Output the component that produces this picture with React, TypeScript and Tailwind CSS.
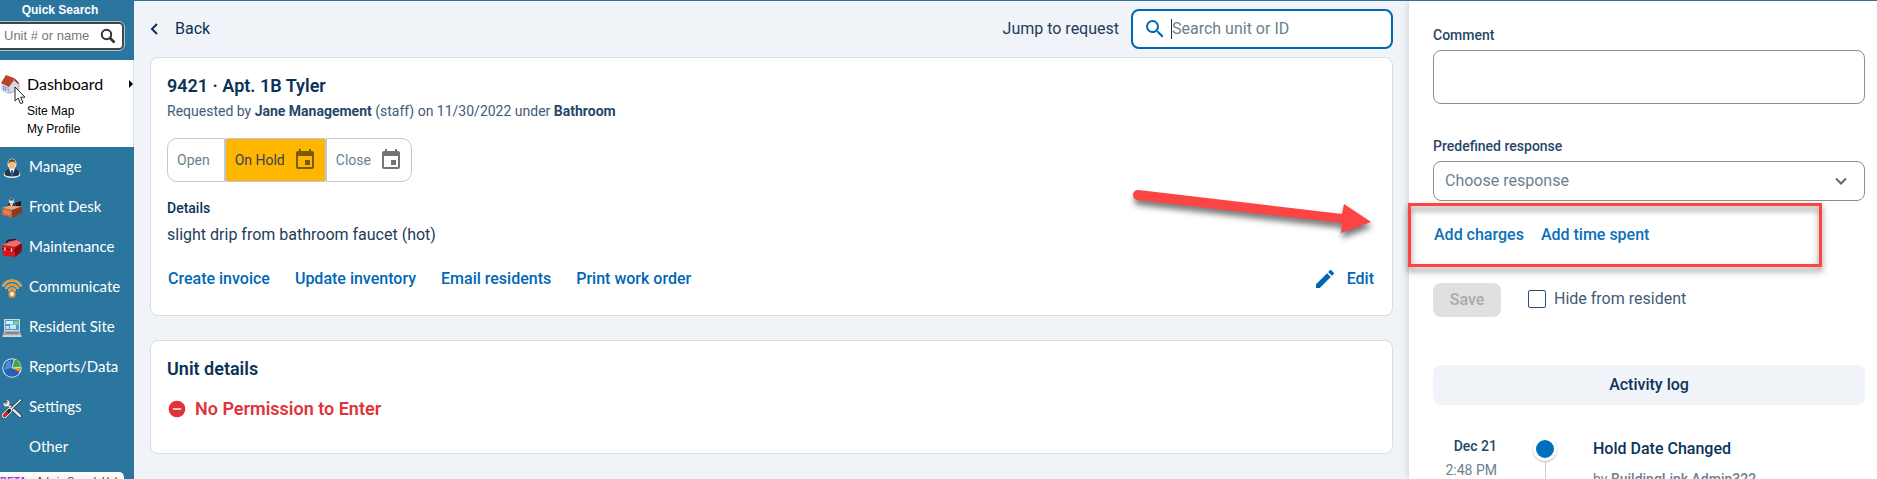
import React from "react";

const CalendarIcon = ({ className }: { className: string }) => (
  <svg viewBox="0 0 24 24" className={className} fill="currentColor" aria-hidden="true">
    <path d="M17 12h-5v5h5v-5zM16 1v2H8V1H6v2H5c-1.11 0-1.99.9-1.99 2L3 19a2 2 0 0 0 2 2h14c1.1 0 2-.9 2-2V5c0-1.1-.9-2-2-2h-1V1h-2zm3 18H5V8h14v11z" />
  </svg>
);

const SearchIcon = ({ className }: { className: string }) => (
  <svg viewBox="0 0 24 24" className={className} fill="currentColor" aria-hidden="true">
    <path d="M15.5 14h-.79l-.28-.27A6.47 6.47 0 0 0 16 9.5 6.5 6.5 0 1 0 9.5 16c1.61 0 3.09-.59 4.23-1.57l.27.28v.79l5 4.99L20.49 19l-4.99-5zm-6 0C7.01 14 5 11.99 5 9.5S7.01 5 9.5 5 14 7.01 14 9.5 11.99 14 9.5 14z" />
  </svg>
);

const HouseIcon = () => (
  <svg viewBox="0 0 20 20" className="size-5 shrink-0" aria-hidden="true">
    <path d="M2 9 8 13V19L2 16.500Z" fill="#eef0fa" stroke="#9aa0b8" strokeWidth=".6" />
    <path d="M8 13 14 6 19 9V16L9 19.500Z" fill="#d7d8e2" stroke="#8a8a96" strokeWidth=".6" />
    <path d="M3 11.500 6.500 13.500V17L3 15.500Z" fill="#4a64d8" />
    <path d="M4.700 12.500V16.500M3 13.500 6.500 15.200" stroke="#fff" strokeWidth=".6" />
    <path d="M6 1 15 4.500 9 13 1 9Z" fill="#b8442a" />
    <path d="M15 4.500 19 9 18 10 14.500 6.500Z" fill="#8c2f1e" />
  </svg>
);

const ManageIcon = () => (
  <svg viewBox="0 0 20 20" className="size-5 shrink-0" aria-hidden="true">
    <ellipse cx="10" cy="16.500" rx="8.500" ry="3.400" fill="#e8eef2" />
    <path d="M2.500 16.500C3 12 6 10.500 10 10.500S17 12 17.500 16.500C16 19 4 19 2.500 16.500Z" fill="#253746" />
    <path d="M7 10.500 10 18 13 10.500Z" fill="#fff" />
    <path d="M9.300 12h1.500l.7 4-1.400 2-1.400-2Z" fill="#1a62a8" />
    <ellipse cx="10" cy="5.800" rx="4.500" ry="5.300" fill="#f4f4f0" />
    <ellipse cx="10" cy="6.200" rx="3.400" ry="4.300" fill="#f2bd7c" />
    <path d="M6.400 6C6 2.500 8 1.200 10 1.200S14 2.500 13.600 6L12.500 3.800 8 3.800Z" fill="#57401e" />
  </svg>
);

const DeskIcon = () => (
  <svg viewBox="0 0 20 20" className="size-5 shrink-0" aria-hidden="true">
    <path d="M5 9C5 6 7 5 9.500 5S13 6 13.500 9Z" fill="#222d3a" />
    <path d="M8 5.500 9.500 9 11 5.500Z" fill="#fff" />
    <circle cx="9.500" cy="3" r="2.600" fill="#e9dfd2" />
    <path d="M7.500 2.500C8 0 11 0 11.500 2.500Z" fill="#45403c" />
    <path d="M13 5 19 3V8L14 9Z" fill="#1b1c20" />
    <path d="M0 10 7 7.500 20 8.500 10 12Z" fill="#f0a074" />
    <path d="M0 10 10 12V20L0 17Z" fill="#c8643c" />
    <path d="M10 12 20 8.500V15L10 20Z" fill="#8e3a1e" />
    <path d="M1.500 11.500 8.500 13V17.500L1.500 15.500Z" fill="#dc8258" />
  </svg>
);

const ToolboxIcon = () => (
  <svg viewBox="0 0 20 20" className="size-5 shrink-0" aria-hidden="true">
    <path d="M4 5 6 2.500 13 1.500 14 4" fill="none" stroke="#3b1010" strokeWidth="1.500" />
    <path d="M0 7 14 2 20 5 13 9Z" fill="#ff6a64" />
    <path d="M0 7 13 9V19L1 17.500Z" fill="#d9161c" />
    <path d="M13 9 20 5 19.500 14 13 19Z" fill="#8e0a10" />
    <path d="M0 10.500 13 12.500 20 8.500" fill="none" stroke="#6e060a" strokeWidth="1" />
    <path d="M3 9.500V12.500M9.500 10.500V13.500" stroke="#e8e8e8" strokeWidth="1.400" />
  </svg>
);

const WifiIcon = () => (
  <svg viewBox="0 0 20 20" className="size-5 shrink-0" fill="none" strokeLinecap="round" aria-hidden="true">
    <g stroke="#f3dcb4" strokeWidth="2.400">
      <path d="M1.400 7.500C5.500 1 14.500 1 18.600 7.500M4.300 9.800C7 5.600 13 5.600 15.700 9.800M7.300 12C9 9.800 11 9.800 12.700 12" />
    </g>
    <g stroke="#e2932a" strokeWidth="1.700">
      <path d="M1.400 7.500C5.500 1 14.500 1 18.600 7.500M4.300 9.800C7 5.600 13 5.600 15.700 9.800M7.300 12C9 9.800 11 9.800 12.700 12" />
    </g>
    <rect x="6.500" y="12.800" width="7" height="7" rx="3" fill="#e2932a" />
    <circle cx="10" cy="16" r="2" fill="#fdf1da" />
  </svg>
);

const LaptopIcon = () => (
  <svg viewBox="0 0 20 20" className="size-5 shrink-0" aria-hidden="true">
    <rect x="2" y="1" width="16" height="12" rx="1" fill="#d4d8da" />
    <rect x="3.200" y="2" width="13.600" height="10" fill="#3f9be8" />
    <path d="M4 3H11V6H4Z" fill="#d8f0ff" />
    <path d="M8 6.500H14V11H8Z" fill="#bfe8fb" />
    <path d="M12 3H16V7H12Z" fill="#8fd35c" />
    <path d="M4 8H7V11H4Z" fill="#f2e48c" />
    <path d="M2 13H18L19.500 18.500H.5Z" fill="#aeb1b3" />
    <path d="M3.500 14H16.500L17 16H3Z" fill="#85888a" />
    <path d="M.5 17.500H19.500V18.800H.5Z" fill="#e4e6e6" />
  </svg>
);

const PieIcon = () => (
  <svg viewBox="0 0 20 20" className="size-5 shrink-0" aria-hidden="true">
    <circle cx="10" cy="10" r="9.700" fill="#dbe8f2" />
    <circle cx="10" cy="10" r="8.700" fill="#2263b0" />
    <path d="M3 12A7.500 7.500 0 0 1 9 2.500V10Z" fill="#4d8dd0" />
    <path d="M11 9.500 12 1.200A8.700 8.700 0 0 1 18.700 9Z" fill="#3fae2c" />
    <path d="M10 10 18.700 9.500A8.700 8.700 0 0 1 17.500 14Z" fill="#ea9a2c" />
    <path d="M12.300 1 10 10 18.700 9.200" fill="none" stroke="#fff" strokeWidth=".8" />
  </svg>
);

const ToolsIcon = () => (
  <svg viewBox="0 0 20 20" className="size-5 shrink-0" fill="none" strokeLinecap="round" aria-hidden="true">
    <path d="M4.500 5.500 18 18" stroke="#1d2830" strokeWidth="4" />
    <path d="M4.500 5.500 18 18" stroke="#e2e5e6" strokeWidth="2.600" />
    <path d="M1.500 4.500C0 8 4 10 7 8C9 5 7 1 4 1.500L5.500 4 4 6Z" fill="#eceeef" stroke="#58636a" strokeWidth=".6" />
    <path d="M18.500 2 8 12" stroke="#27313a" strokeWidth="3" />
    <path d="M18.500 2 8 12" stroke="#f0f2f3" strokeWidth="1.700" />
    <path d="M7.500 12.500 2.500 17.500" stroke="#fff" strokeWidth="5" />
    <path d="M7.500 12.500 5 15" stroke="#20262b" strokeWidth="3.600" />
    <path d="M4.500 15.500 2.500 17.500" stroke="#d3201f" strokeWidth="3.600" />
  </svg>
);

const navItems = [
  { label: "Manage", icon: <ManageIcon /> },
  { label: "Front Desk", icon: <DeskIcon /> },
  { label: "Maintenance", icon: <ToolboxIcon /> },
  { label: "Communicate", icon: <WifiIcon /> },
  { label: "Resident Site", icon: <LaptopIcon /> },
  { label: "Reports/Data", icon: <PieIcon /> },
  { label: "Settings", icon: <ToolsIcon /> },
  { label: "Other", icon: <span className="size-5 shrink-0" /> },
];

function Sidebar() {
  return (
    <aside className="flex w-[134px] shrink-0 flex-col bg-[#2a769f]">
      <form className="flex h-[60px] shrink-0 flex-col" onSubmit={(e) => e.preventDefault()}>
        <label
          htmlFor="quick-search"
          className="pt-0.5 pr-3.5 text-center font-['Liberation_Sans',sans-serif] text-xs leading-4 font-bold text-white"
        >
          Quick Search
        </label>
        <div className="mt-1 mr-2.5 flex h-7 items-center rounded-r-[5px] border-2 border-l-0 border-[#454545] bg-white pr-1.5 pl-1 outline outline-[#a9c4d3]">
          <input
            id="quick-search"
            placeholder="Unit # or name"
            className="w-full min-w-0 bg-transparent font-['Liberation_Sans',sans-serif] text-[13px] text-black outline-none placeholder:text-[#777]"
          />
          <button type="submit" aria-label="Search" className="shrink-0">
            <svg viewBox="0 0 16 16" className="size-4" fill="none" stroke="#333" aria-hidden="true">
              <circle cx="6.500" cy="6.500" r="4.700" strokeWidth="2" />
              <path d="m10 10 4.500 4.500" strokeWidth="2.600" />
            </svg>
          </button>
        </div>
      </form>

      <div className="relative h-[87px] shrink-0 border-r border-dotted border-[#b8c4cc] bg-white pt-3">
        <a href="#dashboard" className="flex items-center gap-[7px] text-base leading-6 text-black">
          <HouseIcon />
          Dashboard
        </a>
        <div className="flex flex-col pt-1.5 pl-[27px] font-['Liberation_Sans',sans-serif] text-xs leading-[18px] text-black">
          <a href="#site-map">Site Map</a>
          <a href="#profile">My Profile</a>
        </div>
        <svg viewBox="0 0 4 8" className="absolute top-5 right-0 h-2 w-1" aria-hidden="true">
          <path d="M0 0 4 4 0 8Z" fill="#000" />
        </svg>
        <svg viewBox="0 0 12 19" className="absolute top-[26px] left-3.5 h-[19px] w-3" aria-hidden="true">
          <path d="M1 1V15L4.200 12 6.500 17.700 9 16.600 6.700 11.200H11Z" fill="#fff" stroke="#222" />
        </svg>
      </div>

      <nav className="flex shrink-0 flex-col">
        {navItems.map((item) => (
          <a
            key={item.label}
            href={"#" + item.label.toLowerCase().replace(/[^a-z]/g, "-")}
            className="flex h-10 items-start gap-[7px] pt-2.5 pl-0.5 text-[15px] leading-[18px] whitespace-nowrap text-white"
          >
            <span className="flex pt-px">{item.icon}</span>
            {item.label}
          </a>
        ))}
      </nav>

      <button
        type="button"
        className="mt-[5px] mr-2.5 flex shrink-0 gap-2.5 rounded-tr-[5px] bg-gradient-to-b from-white to-[#e6e6e6] pt-0.5 font-['Liberation_Sans',sans-serif] text-[10px] leading-4 whitespace-nowrap text-[#333]"
      >
        <strong className="text-[#a03fd0]">BETA</strong>
        Admin Search Help
      </button>
    </aside>
  );
}

const links = ["Create invoice", "Update inventory", "Email residents", "Print work order"];

function RequestCard() {
  return (
    <section className="rounded-lg border border-[#dadde1] bg-white px-4 pt-4 pb-6">
      <h1 className="text-lg leading-6 font-semibold text-[#0b3358]">9421 · Apt. 1B Tyler</h1>
      <p className="mt-px text-sm leading-6 text-[#3f5b78]">
        Requested by <b className="font-bold text-[#274769]">Jane Management</b> (staff) on 11/30/2022 under{" "}
        <b className="font-bold text-[#274769]">Bathroom</b>
      </p>

      <div className="mt-[15px] flex h-11 text-sm text-[#6c7f90]">
        <button type="button" className="rounded-l-[10px] border border-[#b9cadb] pr-3.5 pl-[9px]">
          Open
        </button>
        <button
          type="button"
          className="flex items-center gap-2 rounded-xs border border-[#b9cadb] bg-[#ffb600] pr-2 pl-[9px] text-[#33415a]"
        >
          On Hold
          <CalendarIcon className="size-6 text-[#7a5a08]" />
        </button>
        <button
          type="button"
          className="flex items-center gap-2 rounded-r-[10px] border border-[#b9cadb] pr-2 pl-[9px]"
        >
          Close
          <CalendarIcon className="size-6 text-[#757378]" />
        </button>
      </div>

      <h2 className="mt-4 text-sm leading-5 font-medium text-[#0b3358]">Details</h2>
      <p className="mt-[5px] text-base leading-6 text-[#1e3c5c]">slight drip from bathroom faucet (hot)</p>

      <div className="mt-5 flex items-center gap-[25px] text-base leading-6 font-medium text-[#0067b4]">
        {links.map((text) => (
          <a key={text} href="#" className="first:ml-px">
            {text}
          </a>
        ))}
        <button type="button" className="ml-auto flex items-center gap-2.5 pr-0.5 font-medium">
          <svg viewBox="0 0 24 24" className="size-6" fill="currentColor" aria-hidden="true">
            <path d="M3 17.250V21h3.750L17.810 9.940l-3.750-3.750L3 17.250zM20.710 7.040a1 1 0 0 0 0-1.410l-2.340-2.340a1 1 0 0 0-1.410 0l-1.830 1.830 3.750 3.750 1.830-1.830z" />
          </svg>
          Edit
        </button>
      </div>
    </section>
  );
}

function Main() {
  return (
    <main className="flex min-w-0 flex-1 flex-col bg-[#f0f3f8] px-4">
      <header className="flex h-14 items-center justify-between text-base text-[#0b3358]">
        <button type="button" className="flex items-center gap-[17px]">
          <svg viewBox="0 0 8 12" className="h-3 w-2" fill="none" stroke="currentColor" strokeWidth="2" aria-hidden="true">
            <path d="M7 1 2 6l5 5" />
          </svg>
          Back
        </button>
        <div className="flex items-center gap-3">
          <label htmlFor="jump" className="text-[#1e3c5c]">
            Jump to request
          </label>
          <div className="flex h-10 w-[262px] items-center rounded-lg border-2 border-[#0067b4] bg-white pl-2.5">
            <SearchIcon className="size-6 shrink-0 text-[#0067b4]" />
            <span className="ml-1 h-5 w-px shrink-0 bg-[#0b3358]" />
            <input
              id="jump"
              placeholder="Search unit or ID"
              className="w-full min-w-0 bg-transparent outline-none placeholder:text-[#6c7f8c]"
            />
          </div>
        </div>
      </header>

      <div className="flex flex-col gap-6">
        <RequestCard />
        <section className="rounded-lg border border-[#dadde1] bg-white px-4 pt-4 pb-8">
          <h2 className="text-lg leading-6 font-semibold text-[#0b3358]">Unit details</h2>
          <p className="mt-4 flex items-center gap-2 text-lg leading-6 font-semibold text-[#e03438]">
            <svg viewBox="0 0 24 24" className="size-5" fill="currentColor" aria-hidden="true">
              <path d="M12 2a10 10 0 1 0 0 20 10 10 0 0 0 0-20zm5 11H7v-2h10v2z" />
            </svg>
            No Permission to Enter
          </p>
        </section>
      </div>
    </main>
  );
}

function SidePanel() {
  return (
    <aside className="z-10 flex w-[468px] shrink-0 flex-col bg-white pt-6 pr-3 pl-6 shadow-[0_0_8px_rgba(0,0,0,0.16)]">
      <label htmlFor="comment" className="text-sm leading-5 font-medium text-[#274769]">
        Comment
      </label>
      <textarea id="comment" className="mt-[5px] h-[54px] shrink-0 resize-none rounded-lg border border-[#8f8f8f] px-3 py-2 outline-none" />

      <label htmlFor="response" className="mt-8 text-sm leading-5 font-medium text-[#274769]">
        Predefined response
      </label>
      <div className="relative mt-[5px] shrink-0">
        <select
          id="response"
          className="h-10 w-full appearance-none rounded-lg border border-[#8f8f8f] bg-white px-[11px] text-base text-[#6c7f90] outline-none"
        >
          <option>Choose response</option>
        </select>
        <svg
          viewBox="0 0 12 8"
          className="pointer-events-none absolute top-4 right-[18px] h-2 w-3"
          fill="none"
          stroke="#666"
          strokeWidth="2"
          aria-hidden="true"
        >
          <path d="m1 1.500 5 5 5-5" />
        </svg>
      </div>

      <div className="relative mt-[22px] flex gap-[17px] pl-px text-base leading-6 font-medium text-[#0b70b8]">
        <a href="#charges">Add charges</a>
        <a href="#time">Add time spent</a>
        <div className="pointer-events-none absolute -top-5 -left-[25px] h-16 w-[414px] border-3 border-[#fc4444] drop-shadow-[0_4px_3px_rgba(0,0,0,0.5)]" />
        <svg
          viewBox="0 0 244 52"
          className="pointer-events-none absolute -top-[33px] -left-[302px] h-[52px] w-[244px] overflow-visible drop-shadow-[1px_5px_3px_rgba(0,0,0,0.55)]"
          aria-hidden="true"
        >
          <path d="M7.500 0 211 24 213 14 240 32 210 43 211 33 6.500 10A5 5 0 0 1 7.500 0Z" fill="#fc4444" />
        </svg>
      </div>

      <div className="mt-9 flex items-start">
        <button
          type="button"
          disabled
          className="h-[34px] w-[68px] rounded-lg bg-[#e0e0e0] text-base font-medium text-[#aaa]"
        >
          Save
        </button>
        <label className="ml-[27px] flex items-center gap-2 pt-1 text-base leading-6 text-[#3f5b78]">
          <input type="checkbox" className="size-[18px] appearance-none rounded-xs border border-[#274f78] bg-white" />
          Hide from resident
        </label>
      </div>

      <h2 className="mt-12 flex h-10 shrink-0 items-center justify-center rounded-lg bg-[#f0f3f8] text-base font-medium text-[#0b3358]">
        Activity log
      </h2>

      <article className="mt-[29px] flex">
        <div className="w-16 text-right text-sm leading-6 text-[#6c7f90]">
          <div className="font-medium text-[#274769]">Dec 21</div>
          <div>2:48 PM</div>
        </div>
        <div className="ml-9 flex w-6 flex-col items-center pt-[3px]">
          <span className="size-6 shrink-0 rounded-full border-3 border-white bg-[#0070bd] shadow-[0_1px_2px_rgba(0,0,0,0.25)]" />
          <span className="w-px flex-1 bg-[#ccc]" />
        </div>
        <div className="ml-9 pt-[3px]">
          <h3 className="text-base leading-6 font-medium text-[#0b3358]">Hold Date Changed</h3>
          <p className="mt-2 text-sm leading-5 text-[#6c7f90]">
            by <b className="font-medium">BuildingLink Admin322</b>
          </p>
        </div>
      </article>
    </aside>
  );
}

export default function App() {
  return (
    <div className="flex h-screen overflow-hidden border-t border-[#2b739c] bg-[#f0f3f8] font-[Roboto,sans-serif]">
      <div className="-mt-px flex shrink-0 font-[Lato,sans-serif]">
        <Sidebar />
      </div>
      <Main />
      <SidePanel />
    </div>
  );
}
